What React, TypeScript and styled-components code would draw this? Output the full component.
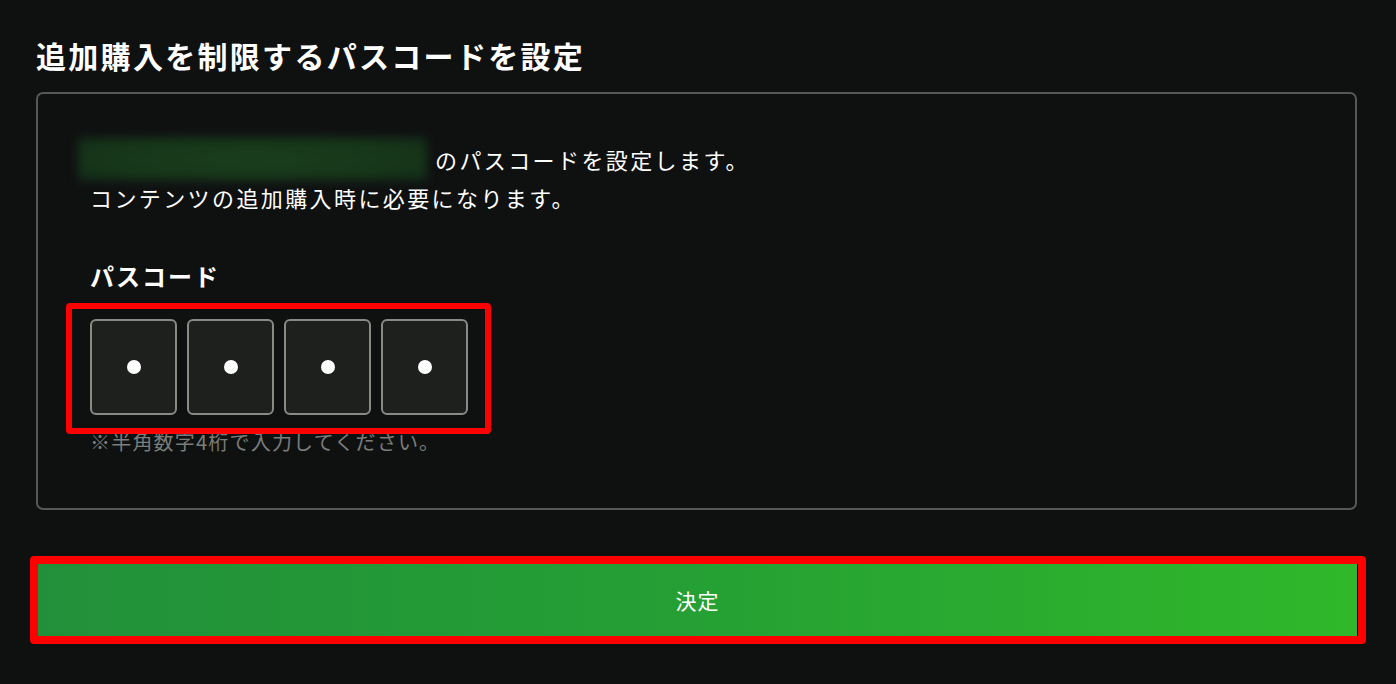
import * as React from "react";
import styled, { createGlobalStyle } from "styled-components";

const GlobalStyle = createGlobalStyle`
  html, body {
    margin: 0;
    padding: 0;
    background: #0f1111;
  }
  body {
    font-family: "Noto Sans CJK JP", "Noto Sans", sans-serif;
    color: #ffffff;
  }
`;

const Page = styled.div`
  width: 1357px;
  min-height: 684px;
  box-sizing: border-box;
  padding: 34px 0 40px 36px;
`;

const Title = styled.h1`
  margin: 0;
  font-size: 30px;
  line-height: 42px;
  font-weight: 700;
  letter-spacing: 2.3px;
`;

const Panel = styled.section`
  margin-top: 16px;
  border: 2px solid #555858;
  border-radius: 7px;
  padding: 46px 52px 52px;
`;

const Lead = styled.p`
  display: flex;
  align-items: center;
  height: 38px;
  margin: 0;
  font-size: 22px;
  letter-spacing: 2.4px;
  white-space: nowrap;
`;

const Masked = styled.span`
  flex: none;
  width: 349px;
  height: 44px;
  margin: 0 8px 0 -12px;
  border-radius: 4px;
  background: radial-gradient(ellipse at center, #1a3f1d 0%, #163519 70%, #13291a 100%);
  filter: blur(5px);
`;

const Label = styled.h2`
  margin: 43px 0 0;
  font-size: 24px;
  line-height: 34px;
  font-weight: 700;
  letter-spacing: 2px;
`;

const CodeRow = styled.div`
  position: relative;
  display: flex;
  gap: 10px;
  width: max-content;
  margin-top: 26px;
`;

const Cell = styled.div`
  box-sizing: border-box;
  width: 87px;
  height: 96px;
  display: flex;
  align-items: center;
  justify-content: center;
  border: 2px solid #868b85;
  border-radius: 6px;
  background: #1e201e;
`;

const Dot = styled.span`
  width: 14px;
  height: 14px;
  border-radius: 50%;
  background: #ffffff;
`;

const Highlight = styled.div<{ $t: number; $r: number; $b: number; $l: number; $w: number }>`
  position: absolute;
  top: ${(p) => -p.$t}px;
  right: ${(p) => -p.$r}px;
  bottom: ${(p) => -p.$b}px;
  left: ${(p) => -p.$l}px;
  border: ${(p) => p.$w}px solid #ff0000;
  border-radius: 4px;
  pointer-events: none;
  z-index: 2;
`;

const Note = styled.p`
  margin: 13px 0 0;
  font-size: 20px;
  line-height: 28px;
  color: #7a7d7b;
  letter-spacing: 1.2px;
`;

const SubmitWrap = styled.div`
  position: relative;
  margin-top: 54px;
  margin-left: 2px;
`;

const Submit = styled.button`
  display: block;
  width: 100%;
  height: 72px;
  border: 0;
  border-radius: 0;
  background: linear-gradient(90deg, #22903a 0%, #25a034 50%, #30b82a 100%);
  color: #ffffff;
  font-family: "Noto Sans CJK JP", "Noto Sans", sans-serif;
  font-size: 21px;
  letter-spacing: 1px;
  cursor: pointer;
`;

export default function App(): JSX.Element {
  const digits = [0, 1, 2, 3];
  return (
    <>
      <GlobalStyle />
      <Page>
        <Title>追加購入を制限するパスコードを設定</Title>
        <Panel>
          <Lead>
            <Masked />
            のパスコードを設定します。
          </Lead>
          <Lead>コンテンツの追加購入時に必要になります。</Lead>
          <Label>パスコード</Label>
          <CodeRow>
            {digits.map((d) => (
              <Cell key={d}>
                <Dot />
              </Cell>
            ))}
            <Highlight $t={16} $r={23} $b={19} $l={24} $w={6} />
          </CodeRow>
          <Note>※半角数字4桁で入力してください。</Note>
        </Panel>
        <SubmitWrap>
          <Submit type="button">決定</Submit>
          <Highlight $t={8} $r={9} $b={8} $l={8} $w={8} />
        </SubmitWrap>
      </Page>
    </>
  );
}
